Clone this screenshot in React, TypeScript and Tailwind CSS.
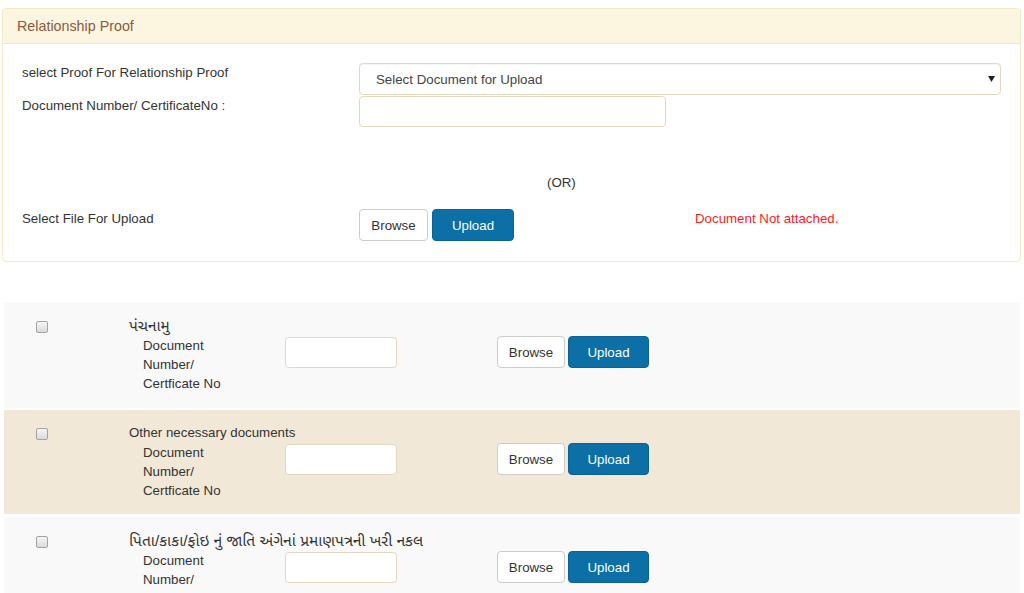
const docRows = [
  { id: "panchnamu", title: "પંચનામુ", bg: "bg-[#f9f9f9]", gu: true, extra: "pb-[15px]" },
  {
    id: "other",
    title: "Other necessary documents",
    bg: "bg-[#f2e8d8]",
    gu: false,
    extra: "pb-[14px] mt-[1px]",
  },
  {
    id: "caste",
    title: "પિતા/કાકા/ફોઇ નું જાતિ અંગેનાં પ્રમાણપત્રની ખરી નકલ",
    bg: "bg-[#f9f9f9]",
    gu: true,
    extra: "pb-[15px] mt-[2px] pt-[14px]",
  },
]

const BrowseButton = ({ w }: { w: string }) => (
  <button
    className={`${w} h-[32px] border border-[#cccccc] rounded-[4px] bg-white text-[#333] text-[13.3px]`}
  >
    Browse
  </button>
)

const UploadButton = ({ w }: { w: string }) => (
  <button
    className={`${w} h-[32px] rounded-[4px] bg-[#0c6fa6] border border-[#0a6397] text-white text-[13.3px]`}
  >
    Upload
  </button>
)

const Checkbox = () => (
  <span className="block w-[12px] h-[12px] rounded-[2px] border border-[#a3a3a3] bg-linear-to-b from-[#f6f6f6] to-[#dadada]" />
)

export default function App() {
  return (
    <div
      className="w-[1024px] h-[593px] overflow-hidden bg-white text-[#333] text-[13.3px] leading-[19px]"
      style={{
        fontFamily:
          '"Liberation Sans", Arial, "Noto Sans Gujarati", "Lohit Gujarati", "Noto Sans", sans-serif',
      }}
    >
      <div className="ml-[2px] mr-[3px] mt-[8px] border border-[#f5e6c8] rounded-[4px]">
        <div className="h-[35px] flex items-center px-[14px] bg-[#fcf5df] border-b border-[#f5e6c8] text-[14.3px] text-[#8b5a3c] rounded-t-[4px]">
          Relationship Proof
        </div>
        <div className="pl-[19px] pr-[19px] pt-[19px] pb-[20px]">
          <div className="flex">
            <div className="w-[337px]">select Proof For Relationship Proof</div>
            <div className="flex-1 h-[32px] flex items-center justify-between pl-[16px] pr-[5px] border border-[#e3d7c0] rounded-[4px] bg-white text-[#444] shadow-[inset_0_1px_1px_rgba(0,0,0,0.04)]">
              <span>Select Document for Upload</span>
              <svg width="7" height="6" viewBox="0 0 7 6">
                <polygon points="0,0 7,0 3.5,6" fill="#222" />
              </svg>
            </div>
          </div>
          <div className="flex mt-[1px]">
            <div className="w-[337px]">Document Number/ CertificateNo :</div>
            <div className="w-[307px] h-[31px] border border-[#e3d7c0] rounded-[4px] bg-white" />
          </div>
          <div className="pl-[525px] mt-[46px]">(OR)</div>
          <div className="flex items-start mt-[17px]">
            <div className="w-[337px]">Select File For Upload</div>
            <div className="flex gap-[4px]">
              <BrowseButton w="w-[69px]" />
              <UploadButton w="w-[82px]" />
            </div>
            <div className="ml-[181px] text-[#ff1a1a]">Document Not attached.</div>
          </div>
        </div>
      </div>

      <div className="mt-[41px] ml-[4px] mr-[4px] flex flex-col gap-[1px]">
        {docRows.map((row) => (
          <div key={row.id} className={`flex pt-[13px] ${row.bg} ${row.extra}`}>
            <div className="w-[125px] pl-[32px] pt-[5px]">
              <Checkbox />
            </div>
            <div className="flex flex-col">
              <div
                className={`h-[20px] leading-[20px] whitespace-nowrap ${row.gu ? "text-[15.5px]" : ""}`}
              >
                {row.title}
              </div>
              <div className="flex items-start">
                <div className="w-[156px] pl-[14px]">
                  Document
                  <br />
                  Number/
                  <br />
                  Certficate No
                </div>
                <div className="w-[112px] h-[31px] mt-[1px] border border-[#e3d7c0] rounded-[4px] bg-white" />
                <div className="ml-[100px] flex gap-[3px]">
                  <BrowseButton w="w-[68px]" />
                  <UploadButton w="w-[81px]" />
                </div>
              </div>
            </div>
          </div>
        ))}
      </div>
    </div>
  )
}
